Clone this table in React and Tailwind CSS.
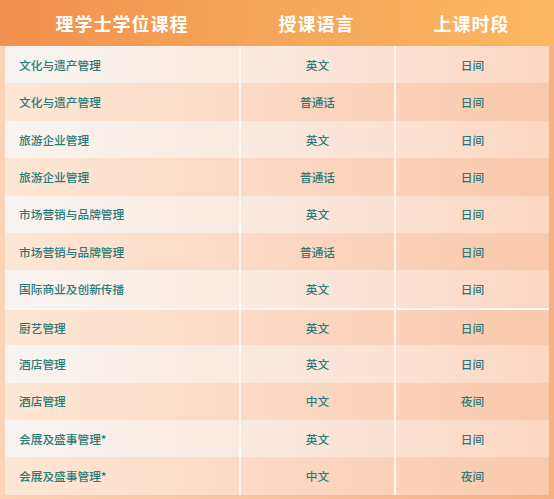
const rows = [
  { name: '文化与遗产管理', lang: '英文', time: '日间' },
  { name: '文化与遗产管理', lang: '普通话', time: '日间' },
  { name: '旅游企业管理', lang: '英文', time: '日间' },
  { name: '旅游企业管理', lang: '普通话', time: '日间' },
  { name: '市场营销与品牌管理', lang: '英文', time: '日间' },
  { name: '市场营销与品牌管理', lang: '普通话', time: '日间' },
  { name: '国际商业及创新传播', lang: '英文', time: '日间' },
  { name: '厨艺管理', lang: '英文', time: '日间' },
  { name: '酒店管理', lang: '英文', time: '日间' },
  { name: '酒店管理', lang: '中文', time: '夜间' },
  { name: '会展及盛事管理*', lang: '英文', time: '日间' },
  { name: '会展及盛事管理*', lang: '中文', time: '夜间' },
]

const font = { fontFamily: '"Noto Sans CJK SC", "Noto Sans", sans-serif' }

export default function App() {
  return (
    <div className="w-[554px] h-[499px] overflow-hidden bg-gradient-to-r from-[#fcd3b7] to-[#f5b185] flex flex-col" style={font}>
      {/* header */}
      <div className="h-[46px] flex items-center bg-gradient-to-r from-[#f2904d] via-[#f6a65a] to-[#fbb862] text-white font-bold text-[18px] tracking-[1px]">
        <div className="w-[239px] pl-[5px] text-center">理学士学位课程</div>
        <div className="w-[155px] text-center">授课语言</div>
        <div className="flex-1 text-center pr-[5px]">上课时段</div>
      </div>

      {/* body */}
      <div className="flex flex-col px-[5px] pb-[3px] flex-1">
        {rows.map((r, i) => (
          <div
            key={i}
            className={
              'flex h-[37.4px] items-center text-[11.7px] font-medium text-[#2b7b78] ' +
              (i % 2 === 0
                ? 'bg-gradient-to-r from-[#f8f4f2] via-[#fbe8dd] to-[#fcd7c2]'
                : 'bg-gradient-to-r from-[#fde7d4] via-[#fbd8c3] to-[#f9c9ac]') +
              (i === 7 ? ' border-t-2 border-[#fff8f2]' : '')
            }
          >
            <div className="w-[234px] h-full flex items-center pl-[14px]">{r.name}</div>
            <div className="w-[155px] h-full flex items-center justify-center border-l-2 border-[#fff8f2]">{r.lang}</div>
            <div className="flex-1 h-full flex items-center justify-center border-l-2 border-[#fff8f2]">{r.time}</div>
          </div>
        ))}
      </div>
    </div>
  )
}
